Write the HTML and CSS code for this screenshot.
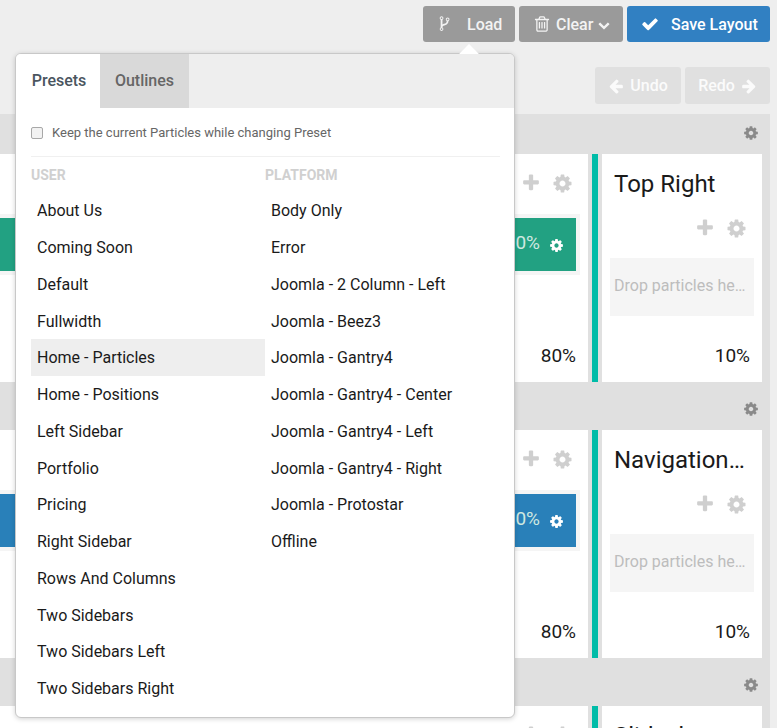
FILE: index.html
```html
<!DOCTYPE html>
<html lang="en">
<head>
<meta charset="utf-8">
<title>Layout Manager</title>
<link rel="stylesheet" href="styles.css">
</head>
<body>
<svg class="sprite" aria-hidden="true">
<symbol id="cog" viewBox="0 0 1792 1792"><path fill-rule="evenodd" d="M1152 896q0-106-75-181t-181-75-181 75-75 181 75 181 181 75 181-75 75-181zm512-109v222q0 12-8 23t-20 13l-185 28q-19 54-39 91 35 50 107 138 10 12 10 25t-9 23q-27 37-99 108t-94 71q-12 0-26-9l-138-108q-44 23-91 38-16 136-29 186-7 28-36 28h-222q-14 0-24.500-8.500t-11.500-21.500l-28-184q-49-16-90-37l-141 107q-10 9-25 9-14 0-25-11-126-114-165-168-7-10-7-23 0-12 8-23 15-21 51-66.500t54-70.500q-27-50-41-99l-183-27q-13-2-21-12.500t-8-23.500v-222q0-12 8-23t19-13l186-28q14-46 39-92-40-57-107-138-10-12-10-24 0-10 9-23 26-36 98.500-107.500t94.500-71.500q13 0 26 10l138 107q44-23 91-38 16-136 29-186 7-28 36-28h222q14 0 24.500 8.500t11.500 21.500l28 184q49 16 90 37l142-107q9-9 24-9 13 0 25 10 129 119 165 170 7 8 7 22 0 12-8 23-15 21-51 66.500t-54 70.500q26 50 41 98l183 28q13 2 21 12.500t8 23.500z"/></symbol>
<symbol id="plus" viewBox="0 0 1792 1792"><path d="M1600 736v192q0 40-28 68t-68 28h-416v416q0 40-28 68t-68 28h-192q-40 0-68-28t-28-68v-416h-416q-40 0-68-28t-28-68v-192q0-40 28-68t68-28h416v-416q0-40 28-68t68-28h192q40 0 68 28t28 68v416h416q40 0 68 28t28 68z"/></symbol>
<symbol id="check" viewBox="0 0 1792 1792"><path d="M1671 566q0 40-28 68l-724 724-136 136q-28 28-68 28t-68-28l-136-136-362-362q-28-28-28-68t28-68l136-136q28-28 68-28t68 28l294 295 656-657q28-28 68-28t68 28l136 136q28 28 28 68z"/></symbol>
<symbol id="chevron" viewBox="0 0 1792 1792"><path d="M1683 808l-742 741q-19 19-45 19t-45-19l-742-741q-19-19-19-45.500t19-45.500l166-165q19-19 45-19t45 19l531 531 531-531q19-19 45-19t45 19l166 165q19 19 19 45.500t-19 45.500z"/></symbol>
<symbol id="left" viewBox="0 0 1792 1792"><path d="M1664 896v128q0 53-32.500 90.500t-84.500 37.500h-704l293 294q38 36 38 90t-38 90l-75 76q-37 37-90 37-52 0-91-37l-651-652q-37-37-37-90 0-52 37-91l651-650q38-38 91-38 52 0 90 38l75 74q38 38 38 91t-38 91l-293 293h704q52 0 84.500 37.500t32.500 90.500z"/></symbol>
<symbol id="right" viewBox="0 0 1792 1792"><path d="M1600 960q0 54-37 91l-651 651q-39 37-91 37-51 0-90-37l-75-75q-38-38-38-91t38-91l293-293h-704q-52 0-84.500-37.500t-32.500-90.500v-128q0-53 32.500-90.500t84.500-37.500h704l-293-294q-38-36-38-90t38-90l75-75q38-38 90-38 53 0 91 38l651 651q37 35 37 90z"/></symbol>
<symbol id="trash" viewBox="0 0 1792 1792"><path fill-rule="evenodd" d="M704 736v576q0 14-9 23t-23 9h-64q-14 0-23-9t-9-23v-576q0-14 9-23t23-9h64q14 0 23 9t9 23zm256 0v576q0 14-9 23t-23 9h-64q-14 0-23-9t-9-23v-576q0-14 9-23t23-9h64q14 0 23 9t9 23zm256 0v576q0 14-9 23t-23 9h-64q-14 0-23-9t-9-23v-576q0-14 9-23t23-9h64q14 0 23 9t9 23zm128 724v-948h-896v948q0 22 7 40.500t14.500 27 10.500 8.500h832q3 0 10.500-8.500t14.500-27 7-40.500zm-672-1076h448l-48-117q-7-9-17-11h-317q-10 2-17 11zm928 32v64q0 14-9 23t-23 9h-96v948q0 83-47 143.500t-113 60.500h-832q-66 0-113-58.500t-47-141.500v-952h-96q-14 0-23-9t-9-23v-64q0-14 9-23t23-9h309l70-167q15-37 54-63t79-26h320q40 0 79 26t54 63l70 167h309q14 0 23 9t9 23z"/></symbol>
<symbol id="fork" viewBox="0 0 1792 1792"><path fill-rule="evenodd" d="M576 1376q0-40-28-68t-68-28-68 28-28 68 28 68 68 28 68-28 28-68zm0-1152q0-40-28-68t-68-28-68 28-28 68 28 68 68 28 68-28 28-68zm640 128q0-40-28-68t-68-28-68 28-28 68 28 68 68 28 68-28 28-68zm96 0q0 52-26 96.500t-70 69.500q-2 287-226 414-67 38-203 81-128 40-169.500 71t-41.500 100v26q44 25 70 69.500t26 96.500q0 80-56 136t-136 56-136-56-56-136q0-52 26-96.500t70-69.500v-820q-44-25-70-69.500t-26-96.500q0-80 56-136t136-56 136 56 56 136q0 52-26 96.500t-70 69.500v497q54-26 154-57 55-17 87.500-29.500t70.500-31 59-39.500 40.500-51 28-69.500 8.500-91.500q-44-25-70-69.500t-26-96.500q0-80 56-136t136-56 136 56 56 136z"/></symbol>
</svg>

<header class="toolbar">
  <a class="btn btn-gray btn-load"><svg class="ico ico-fork"><use href="#fork"/></svg><span>Load</span></a>
  <a class="btn btn-gray btn-clear"><svg class="ico ico-trash"><use href="#trash"/></svg><span>Clear</span><svg class="ico ico-chev"><use href="#chevron"/></svg></a>
  <a class="btn btn-blue btn-save"><svg class="ico ico-check"><use href="#check"/></svg><span>Save Layout</span></a>
</header>
<div class="history">
  <a class="btn btn-off btn-undo"><svg class="ico ico-arrow"><use href="#left"/></svg><span>Undo</span></a>
  <a class="btn btn-off btn-redo"><span>Redo</span><svg class="ico ico-arrow"><use href="#right"/></svg></a>
</div>

<main class="sections">
  <section class="section">
    <div class="section-head"><svg class="ico ico-cog-head"><use href="#cog"/></svg></div>
    <div class="row">
      <div class="block block-main">
        <div class="main-top"><div class="actions"><svg class="ico ico-plus"><use href="#plus"/></svg><svg class="ico ico-cog"><use href="#cog"/></svg></div></div>
        <div class="particle-wrap"><div class="particle particle-green"><span class="pct">100%</span><svg class="ico ico-cog-sm"><use href="#cog"/></svg></div></div>
        <div class="size">80%</div>
      </div>
      <div class="divider"></div>
      <div class="block block-side">
        <h3 class="title">Top Right</h3>
        <div class="actions actions-side"><svg class="ico ico-plus"><use href="#plus"/></svg><svg class="ico ico-cog"><use href="#cog"/></svg></div>
        <div class="drop">Drop particles here...</div>
        <div class="size">10%</div>
      </div>
    </div>
  </section>
  <section class="section">
    <div class="section-head"><svg class="ico ico-cog-head"><use href="#cog"/></svg></div>
    <div class="row">
      <div class="block block-main">
        <div class="main-top"><div class="actions"><svg class="ico ico-plus"><use href="#plus"/></svg><svg class="ico ico-cog"><use href="#cog"/></svg></div></div>
        <div class="particle-wrap"><div class="particle particle-blue"><span class="pct">80%</span><svg class="ico ico-cog-sm"><use href="#cog"/></svg></div></div>
        <div class="size">80%</div>
      </div>
      <div class="divider"></div>
      <div class="block block-side">
        <h3 class="title">Navigation Right</h3>
        <div class="actions actions-side"><svg class="ico ico-plus"><use href="#plus"/></svg><svg class="ico ico-cog"><use href="#cog"/></svg></div>
        <div class="drop">Drop particles here...</div>
        <div class="size">10%</div>
      </div>
    </div>
  </section>
  <section class="section">
    <div class="section-head"><svg class="ico ico-cog-head"><use href="#cog"/></svg></div>
    <div class="row">
      <div class="block block-main">
        <div class="main-top"><div class="actions"><svg class="ico ico-plus"><use href="#plus"/></svg><svg class="ico ico-cog"><use href="#cog"/></svg></div></div>
      </div>
      <div class="divider"></div>
      <div class="block block-side">
        <h3 class="title">Slideshow</h3>
      </div>
    </div>
  </section>
</main>

<aside class="popover">
  <nav class="tabs">
    <a class="tab tab-active">Presets</a>
    <a class="tab tab-idle">Outlines</a>
  </nav>
  <div class="pop-body">
    <label class="keep"><input type="checkbox"><span>Keep the current Particles while changing Preset</span></label>
    <div class="cols">
      <div class="col">
        <h4 class="col-head">User</h4>
        <ul class="list">
          <li>About Us</li>
          <li>Coming Soon</li>
          <li>Default</li>
          <li>Fullwidth</li>
          <li class="current">Home - Particles</li>
          <li>Home - Positions</li>
          <li>Left Sidebar</li>
          <li>Portfolio</li>
          <li>Pricing</li>
          <li>Right Sidebar</li>
          <li>Rows And Columns</li>
          <li>Two Sidebars</li>
          <li>Two Sidebars Left</li>
          <li>Two Sidebars Right</li>
        </ul>
      </div>
      <div class="col">
        <h4 class="col-head">Platform</h4>
        <ul class="list">
          <li>Body Only</li>
          <li>Error</li>
          <li>Joomla - 2 Column - Left</li>
          <li>Joomla - Beez3</li>
          <li>Joomla - Gantry4</li>
          <li>Joomla - Gantry4 - Center</li>
          <li>Joomla - Gantry4 - Left</li>
          <li>Joomla - Gantry4 - Right</li>
          <li>Joomla - Protostar</li>
          <li>Offline</li>
        </ul>
      </div>
    </div>
  </div>
</aside>
</body>
</html>
```
FILE: styles.css
```css
* { box-sizing: border-box; }
html, body { margin: 0; height: 728px; overflow: hidden; }
body { position: relative; background: #eeeeee; font-family: Roboto, "Liberation Sans", sans-serif; color: #1a1a1a; }
.sprite { display: none; }
.ico { fill: currentColor; flex: none; display: block; }

.toolbar { display: flex; justify-content: flex-end; gap: 4px; width: 770px; padding-top: 6px; height: 67px; }
.history { display: flex; justify-content: flex-end; gap: 4px; width: 770px; height: 47px; }
.btn { display: flex; align-items: center; height: 36px; border-radius: 3px; font-size: 16px; font-weight: 500; color: #fff; }
.btn-gray { background: #9a9a9a; color: #f3f3f3; }
.btn-blue { background: #3180c2; }
.btn-off { background: #e0e0e0; color: #fbfbfb; height: 37px; justify-content: center; gap: 6px; }
.btn-load { width: 92px; padding-left: 14px; }
.btn-clear { width: 104px; padding-left: 14px; }
.btn-save { width: 143px; padding-left: 14px; }
.btn-undo { width: 86px; }
.btn-redo { width: 85px; }
.ico-fork { width: 17px; height: 17px; margin-right: 13px; }
.ico-trash { width: 18px; height: 18px; margin-right: 5px; }
.ico-chev { width: 12px; height: 12px; margin-left: 5px; margin-top: 2px; }
.ico-check { width: 18px; height: 18px; margin-right: 12px; }
.ico-arrow { width: 16px; height: 16px; }

.sections { width: 770px; }
.section { background: #e0e0e0; padding-right: 8px; }
.section + .section { padding-top: 8px; }
.section-head { height: 40px; display: flex; align-items: center; justify-content: flex-end; color: #8a8a8a; padding-right: 3px; }
.ico-cog-head { width: 16px; height: 16px; margin-top: -3px; }
.row { display: flex; height: 228px; }
.block { background: #fff; display: flex; flex-direction: column; padding: 8px; }
.block-main { width: 588px; padding-left: 0; }
.block-side { width: 160px; }
.divider { width: 6px; margin: 0 4px; background: #00bca8; }
.main-top { display: flex; justify-content: flex-end; }
.title { margin: 0; font-size: 24px; font-weight: 400; line-height: 28px; padding: 8px 4px 0; color: #1a1a1a; white-space: nowrap; overflow: hidden; text-overflow: ellipsis; }
.actions { display: flex; justify-content: flex-end; gap: 11px; align-items: center; color: #cfcfcf; padding: 0 7px 0 0; height: 42px; }
.actions-side { height: 40px; padding-top: 20px; }
.ico-plus { width: 20px; height: 20px; }
.ico-cog { width: 21px; height: 21px; }
.particle-wrap { background: #f5f5f5; padding: 4px 4px 4px 0; height: 61px; margin-top: 10px; }
.particle { height: 53px; display: flex; align-items: center; justify-content: flex-end; padding-right: 12px; color: #cfe8e0; font-size: 19px; gap: 9px; }
.pct { position: relative; top: -2px; }
.particle-green { background: #22a182; }
.particle-blue { background: #2980b9; }
.ico-cog-sm { width: 15px; height: 15px; color: #fff; margin-top: 1px; }
.drop { background: #f5f5f5; height: 58px; margin-top: 20px; padding: 0 4px; display: block; line-height: 56px; color: #bdbdbd; font-size: 16px; white-space: nowrap; overflow: hidden; text-overflow: ellipsis; }
.size { margin-top: auto; text-align: right; font-size: 19px; line-height: 22px; padding: 0 4px 7px 0; color: #1a1a1a; }

.popover { position: absolute; left: 15px; top: 53px; width: 500px; height: 665px; background: #fff; border: 1px solid #c8c8c8; border-radius: 6px; box-shadow: 0 1px 5px rgba(0,0,0,0.18); }
.popover::after { content: ""; position: absolute; left: 446px; top: -7px; width: 14px; height: 14px; background: #fff; transform: rotate(45deg); }
.tabs { display: flex; height: 54px; background: #eeeeee; border-radius: 5px 5px 0 0; overflow: hidden; font-size: 16px; font-weight: 500; position: relative; z-index: 1; }
.tab { display: flex; align-items: center; justify-content: center; height: 54px; padding-bottom: 2px; }
.tab-active { width: 84px; padding-left: 2px; background: #fff; color: #4a5560; }
.tab-idle { width: 89px; background: #d9d9d9; color: #666; }
.pop-body { padding: 0 14px 0 15px; }
.keep { display: flex; align-items: center; height: 49px; padding-top: 1px; font-size: 13px; color: #666; border-bottom: 1px solid #f0f0f0; }
.keep input { appearance: none; margin: 0 9px 0 0; width: 12px; height: 12px; background: #f2f2f2; border: 1px solid #a8a8a8; border-radius: 2px; }
.cols { display: flex; }
.col { width: 234px; }
.col-head { margin: 0; height: 35.4px; padding-top: 11px; line-height: 14px; font-size: 14px; font-weight: 700; text-transform: uppercase; color: #d0d0d0; }
.list { list-style: none; margin: 0; padding: 0; }
.list li { height: 36.75px; line-height: 38px; padding-left: 6px; font-size: 16px; color: #1a1a1a; }
.list .current { background: #eeeeee; }
```
